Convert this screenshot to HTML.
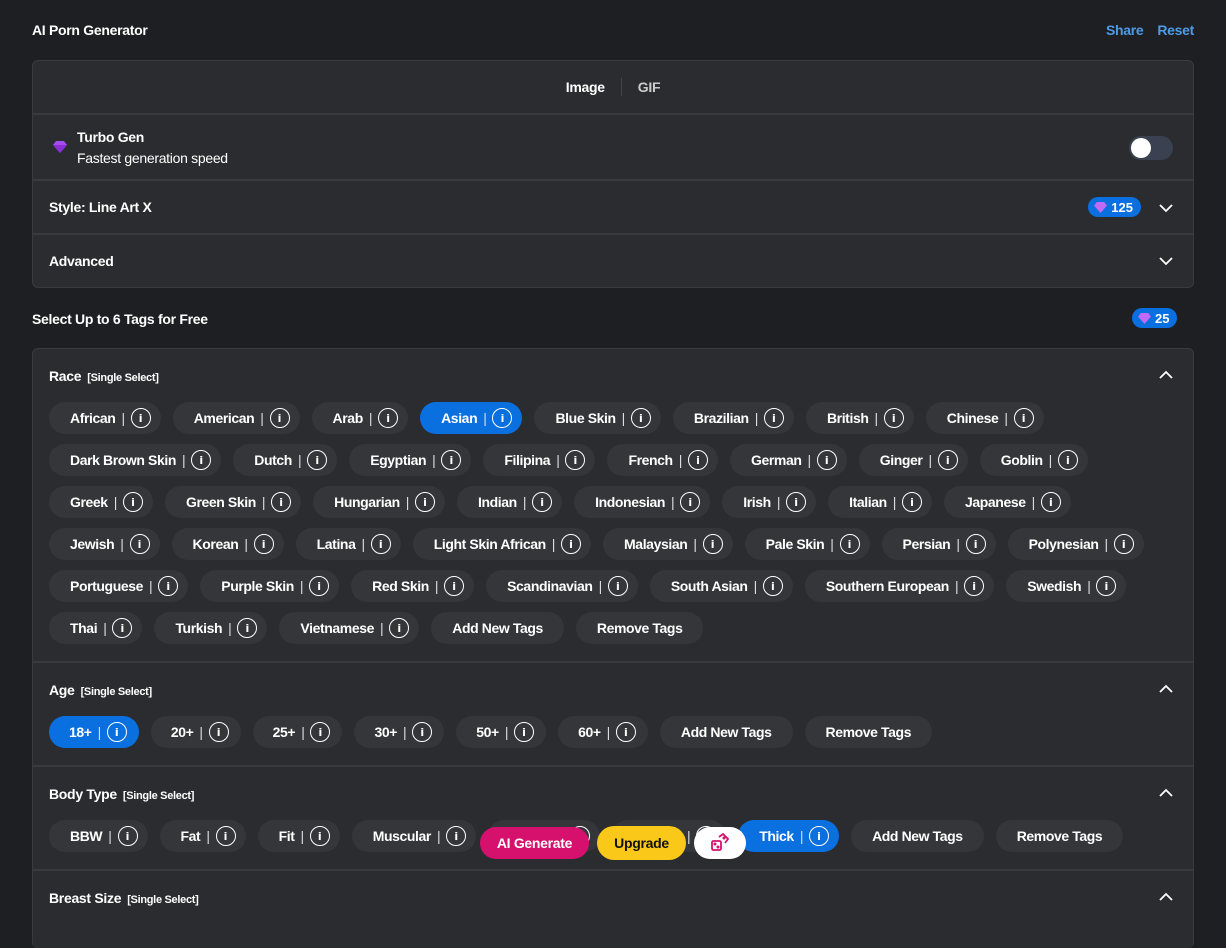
<!DOCTYPE html>
<html><head><meta charset="utf-8"><style>
*{box-sizing:border-box;margin:0;padding:0}
body{width:1226px;height:924px;overflow:hidden;background:#1e1f22;font-family:"Liberation Sans",sans-serif;color:#fff;position:relative}
.title{position:absolute;left:32px;top:22px;font-size:14px;font-weight:bold;letter-spacing:-0.3px}
.links{position:absolute;right:32px;top:22px;font-size:14px;font-weight:bold;color:#4c9be8;letter-spacing:-0.3px}
.links span{margin-left:14px}
.card{position:absolute;left:32px;width:1162px;background:#2b2c30;border:1px solid #3a3b3f;border-radius:6px}
.row{border-bottom:2px solid #3a3b3f;position:relative}
.chev{position:absolute;right:20px;width:14px;height:14px}
.badge{display:inline-flex;align-items:center;background:#0a6fdf;border-radius:10px;height:20px;padding:0 8px 0 6px;font-size:13px;font-weight:bold}
.gem{width:13px;height:11px;margin-right:4px}
.lines{position:absolute;left:16px;right:16px}
.line{display:flex;gap:12px;height:32px;margin-bottom:10px}
.chip{height:32px;border-radius:16px;background:#35363a;display:flex;align-items:center;padding:0 10px 0 21px;font-size:14px;font-weight:bold;white-space:nowrap;letter-spacing:-0.4px}
.chip .s{margin:0 6px;font-weight:normal;color:#ddd}
.chip.b{padding:0 21px}
.chip.sel{background:#0a6fdf}
.age .chip{padding:0 12px 0 20px}
.age .chip.b{padding:0 21px}
.i{width:20px;height:20px;border:1.6px solid #fff;border-radius:50%;display:inline-flex;align-items:center;justify-content:center;font-size:11px;font-family:"DejaVu Sans",sans-serif;letter-spacing:0}
.hdr{position:absolute;left:16px;font-size:14px;font-weight:bold;letter-spacing:-0.3px}
.hdr small{font-size:11px;margin-left:6px}
</style></head><body>
<div class="title">AI Porn Generator</div>
<div class="links"><span>Share</span><span>Reset</span></div>

<div class="card" style="top:60px;height:228px">
 <div class="row" style="height:54px;display:flex;justify-content:center;align-items:center;font-size:14px;font-weight:bold;letter-spacing:-0.3px">
  <span>Image</span><span style="width:1px;height:18px;background:#444;margin:0 16px"></span><span style="color:#ccc">GIF</span>
 </div>
 <div class="row" style="height:66px">
  <svg style="position:absolute;left:20px;top:26px" width="14" height="12" viewBox="0 0 14 12"><path d="M3 0h8l3 4-7 8-7-8z" fill="#a64cf0"/><path d="M0 4h14L7 12z" fill="#8a2fd6"/></svg>
  <div style="position:absolute;left:44px;top:14px;font-size:14px;font-weight:bold;letter-spacing:-0.3px">Turbo Gen</div>
  <div style="position:absolute;left:44px;top:35px;font-size:14px;letter-spacing:-0.3px">Fastest generation speed</div>
  <div style="position:absolute;right:20px;top:21px;width:44px;height:24px;border-radius:12px;background:#3a4150"><div style="position:absolute;left:2px;top:2px;width:20px;height:20px;border-radius:50%;background:#fff"></div></div>
 </div>
 <div class="row" style="height:54px">
  <div style="position:absolute;left:16px;top:18px;font-size:14px;font-weight:bold;letter-spacing:-0.3px">Style: Line Art X</div>
  <div class="badge" style="position:absolute;right:52px;top:16px"><svg class="gem" viewBox="0 0 14 12"><path d="M3 0h8l3 4-7 8-7-8z" fill="#c06bf5"/></svg>125</div>
  <svg class="chev" style="top:20px" viewBox="0 0 14 14"><path d="M1 4l6 6 6-6" stroke="#fff" stroke-width="1.8" fill="none"/></svg>
 </div>
 <div style="height:52px;position:relative">
  <div style="position:absolute;left:16px;top:18px;font-size:14px;font-weight:bold;letter-spacing:-0.3px">Advanced</div>
  <svg class="chev" style="top:19px" viewBox="0 0 14 14"><path d="M1 4l6 6 6-6" stroke="#fff" stroke-width="1.8" fill="none"/></svg>
 </div>
</div>

<div style="position:absolute;left:32px;top:311px;font-size:14px;font-weight:bold;letter-spacing:-0.3px">Select Up to 6 Tags for Free</div>
<div class="badge" style="position:absolute;left:1132px;top:308px"><svg class="gem" viewBox="0 0 14 12"><path d="M3 0h8l3 4-7 8-7-8z" fill="#c06bf5"/></svg>25</div>

<div class="card" style="top:348px;height:600px;border-bottom:none">
 <div class="row" style="height:314px">
  <div class="hdr" style="top:19px">Race<small>[Single Select]</small></div>
  <svg class="chev" style="top:19px" viewBox="0 0 14 14"><path d="M1 10l6-6 6 6" stroke="#fff" stroke-width="1.8" fill="none"/></svg>
  <div class="lines" style="top:53px">
   <div class="line"><div class="chip">African<span class="s">|</span><span class="i">i</span></div><div class="chip">American<span class="s">|</span><span class="i">i</span></div><div class="chip">Arab<span class="s">|</span><span class="i">i</span></div><div class="chip sel">Asian<span class="s">|</span><span class="i">i</span></div><div class="chip">Blue Skin<span class="s">|</span><span class="i">i</span></div><div class="chip">Brazilian<span class="s">|</span><span class="i">i</span></div><div class="chip">British<span class="s">|</span><span class="i">i</span></div><div class="chip">Chinese<span class="s">|</span><span class="i">i</span></div></div>
   <div class="line"><div class="chip">Dark Brown Skin<span class="s">|</span><span class="i">i</span></div><div class="chip">Dutch<span class="s">|</span><span class="i">i</span></div><div class="chip">Egyptian<span class="s">|</span><span class="i">i</span></div><div class="chip">Filipina<span class="s">|</span><span class="i">i</span></div><div class="chip">French<span class="s">|</span><span class="i">i</span></div><div class="chip">German<span class="s">|</span><span class="i">i</span></div><div class="chip">Ginger<span class="s">|</span><span class="i">i</span></div><div class="chip">Goblin<span class="s">|</span><span class="i">i</span></div></div>
   <div class="line"><div class="chip">Greek<span class="s">|</span><span class="i">i</span></div><div class="chip">Green Skin<span class="s">|</span><span class="i">i</span></div><div class="chip">Hungarian<span class="s">|</span><span class="i">i</span></div><div class="chip">Indian<span class="s">|</span><span class="i">i</span></div><div class="chip">Indonesian<span class="s">|</span><span class="i">i</span></div><div class="chip">Irish<span class="s">|</span><span class="i">i</span></div><div class="chip">Italian<span class="s">|</span><span class="i">i</span></div><div class="chip">Japanese<span class="s">|</span><span class="i">i</span></div></div>
   <div class="line"><div class="chip">Jewish<span class="s">|</span><span class="i">i</span></div><div class="chip">Korean<span class="s">|</span><span class="i">i</span></div><div class="chip">Latina<span class="s">|</span><span class="i">i</span></div><div class="chip">Light Skin African<span class="s">|</span><span class="i">i</span></div><div class="chip">Malaysian<span class="s">|</span><span class="i">i</span></div><div class="chip">Pale Skin<span class="s">|</span><span class="i">i</span></div><div class="chip">Persian<span class="s">|</span><span class="i">i</span></div><div class="chip">Polynesian<span class="s">|</span><span class="i">i</span></div></div>
   <div class="line"><div class="chip">Portuguese<span class="s">|</span><span class="i">i</span></div><div class="chip">Purple Skin<span class="s">|</span><span class="i">i</span></div><div class="chip">Red Skin<span class="s">|</span><span class="i">i</span></div><div class="chip">Scandinavian<span class="s">|</span><span class="i">i</span></div><div class="chip">South Asian<span class="s">|</span><span class="i">i</span></div><div class="chip">Southern European<span class="s">|</span><span class="i">i</span></div><div class="chip">Swedish<span class="s">|</span><span class="i">i</span></div></div>
   <div class="line"><div class="chip">Thai<span class="s">|</span><span class="i">i</span></div><div class="chip">Turkish<span class="s">|</span><span class="i">i</span></div><div class="chip">Vietnamese<span class="s">|</span><span class="i">i</span></div><div class="chip b">Add New Tags</div><div class="chip b">Remove Tags</div></div>
  </div>
 </div>
 <div class="row" style="height:104px">
  <div class="hdr" style="top:19px">Age<small>[Single Select]</small></div>
  <svg class="chev" style="top:19px" viewBox="0 0 14 14"><path d="M1 10l6-6 6 6" stroke="#fff" stroke-width="1.8" fill="none"/></svg>
  <div class="lines age" style="top:53px"><div class="line"><div class="chip sel">18+<span class="s">|</span><span class="i">i</span></div><div class="chip">20+<span class="s">|</span><span class="i">i</span></div><div class="chip">25+<span class="s">|</span><span class="i">i</span></div><div class="chip">30+<span class="s">|</span><span class="i">i</span></div><div class="chip">50+<span class="s">|</span><span class="i">i</span></div><div class="chip">60+<span class="s">|</span><span class="i">i</span></div><div class="chip b">Add New Tags</div><div class="chip b">Remove Tags</div></div></div>
 </div>
 <div class="row" style="height:104px">
  <div class="hdr" style="top:19px">Body Type<small>[Single Select]</small></div>
  <svg class="chev" style="top:19px" viewBox="0 0 14 14"><path d="M1 10l6-6 6 6" stroke="#fff" stroke-width="1.8" fill="none"/></svg>
  <div class="lines" style="top:53px"><div class="line"><div class="chip">BBW<span class="s">|</span><span class="i">i</span></div><div class="chip">Fat<span class="s">|</span><span class="i">i</span></div><div class="chip">Fit<span class="s">|</span><span class="i">i</span></div><div class="chip">Muscular<span class="s">|</span><span class="i">i</span></div><div class="chip" style="width:112px;justify-content:flex-end">Slim<span class="s">|</span><span class="i">i</span></div><div class="chip" style="width:114px;justify-content:flex-end">Petite<span class="s">|</span><span class="i">i</span></div><div class="chip sel">Thick<span class="s">|</span><span class="i">i</span></div><div class="chip b">Add New Tags</div><div class="chip b">Remove Tags</div></div></div>
 </div>
 <div style="height:60px;position:relative">
  <div class="hdr" style="top:19px">Breast Size<small>[Single Select]</small></div>
  <svg class="chev" style="top:19px" viewBox="0 0 14 14"><path d="M1 10l6-6 6 6" stroke="#fff" stroke-width="1.8" fill="none"/></svg>
 </div>
</div>

<div style="position:absolute;left:480px;top:827px;width:109px;height:32px;border-radius:16px;background:#d6106d;font-size:14px;font-weight:bold;letter-spacing:-0.3px;display:flex;align-items:center;justify-content:center">AI Generate</div>
<div style="position:absolute;left:597px;top:826px;width:89px;height:34px;border-radius:17px;background:#f9c818;color:#111;font-size:14px;font-weight:bold;letter-spacing:-0.3px;display:flex;align-items:center;justify-content:center">Upgrade</div>
<div style="position:absolute;left:694px;top:827px;width:52px;height:32px;border-radius:16px;background:#fff;display:flex;align-items:center;justify-content:center">
 <svg width="20" height="20" viewBox="0 0 20 20" fill="none" stroke="#d6106d" stroke-width="1.8"><rect x="2" y="8" width="9" height="9" rx="1.5"/><path d="M9 4l4-3 5 5-3 4"/><circle cx="5" cy="11" r=".6" fill="#d6106d"/><circle cx="8" cy="14" r=".6" fill="#d6106d"/><circle cx="14" cy="5" r=".6" fill="#d6106d"/></svg>
</div>
</body></html>
